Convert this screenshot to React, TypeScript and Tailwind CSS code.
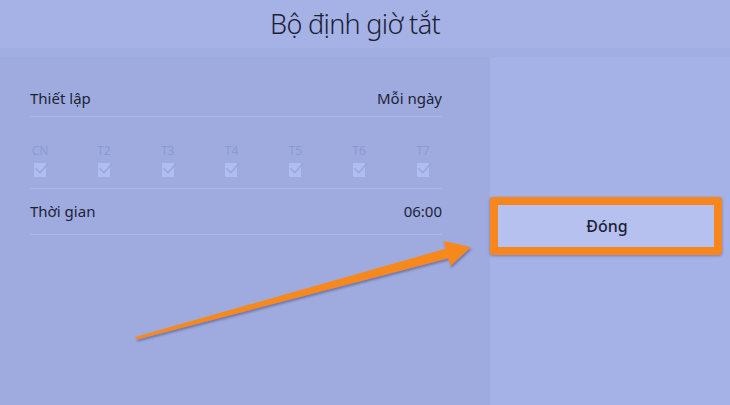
import React from "react";

const days = ["CN", "T2", "T3", "T4", "T5", "T6", "T7"];

function DayCheck({ label }: { label: string }) {
  return (
    <div className="flex w-4 flex-col items-center">
      <span className="text-[12px] leading-none text-[#8a9ad4]">{label}</span>
      <div className="relative mt-[6px] h-[14px] w-[12px] bg-[#b1bdee]">
        <svg
          viewBox="0 0 16 16"
          className="absolute -top-[3px] left-0 h-[16px] w-[16px]"
          fill="none"
          stroke="#93a8e6"
          strokeWidth="1.6"
        >
          <path d="M1.5 8.5 L6 12.5 L14.5 3" />
        </svg>
      </div>
    </div>
  );
}

export default function App() {
  return (
    <div
      className="relative h-[405px] w-[730px] overflow-hidden bg-[#a6b2e6] text-[#1c1f36]"
      style={{ fontFamily: '"Noto Sans", "Open Sans", sans-serif' }}
    >
      {/* tiêu đề */}
      <div className="flex h-[48px] items-center justify-center pr-[20px]">
        <h1 className="text-[27px] font-light tracking-tight">Bộ định giờ tắt</h1>
      </div>

      <div className="h-[9px] bg-[#a1aee2]" />

      <div className="flex h-[348px]">
        {/* cột trái */}
        <div className="w-[490px] bg-[#9fabdf] pl-[30px] pr-[48px] pt-[23px]">
          <div className="flex h-[36px] items-center justify-between text-[15px]">
            <span>Thiết lập</span>
            <span>Mỗi ngày</span>
          </div>
          <div className="h-px bg-[#aab6e8]" />

          <div className="ml-[2px] mt-[28px] flex w-[399px] justify-between">
            {days.map((d) => (
              <DayCheck key={d} label={d} />
            ))}
          </div>
          <div className="mt-[11px] h-px bg-[#aab6e8]" />

          <div className="flex h-[45px] items-center justify-between text-[15px]">
            <span>Thời gian</span>
            <span>06:00</span>
          </div>
          <div className="h-px bg-[#aab6e8]" />
        </div>

        {/* cột phải */}
        <div className="flex-1 bg-[#a5b2e7] pt-[140px]">
          <div className="h-[58px] w-[232px] rounded-[3px] border-[8px] border-[#f7861c] bg-[#b6c1ef] shadow-[0_1px_3px_rgba(40,50,110,0.4)]">
            <div className="flex h-full items-center justify-center pl-[2px] text-[16px] font-medium">
              Đóng
            </div>
          </div>
        </div>
      </div>

      {/* mũi tên */}
      <svg className="pointer-events-none absolute left-0 top-0" width="730" height="405">
        <defs>
          <filter id="sh" x="-10%" y="-10%" width="120%" height="130%">
            <feDropShadow dx="1" dy="2" stdDeviation="1.2" floodColor="#3a3f70" floodOpacity="0.5" />
          </filter>
        </defs>
        <polygon
          points="135,337 445.7,248.7 443.6,240.9 471,247 450.4,266.1 448.3,258.3 137,339.5"
          fill="#f7881d"
          filter="url(#sh)"
        />
      </svg>
    </div>
  );
}
